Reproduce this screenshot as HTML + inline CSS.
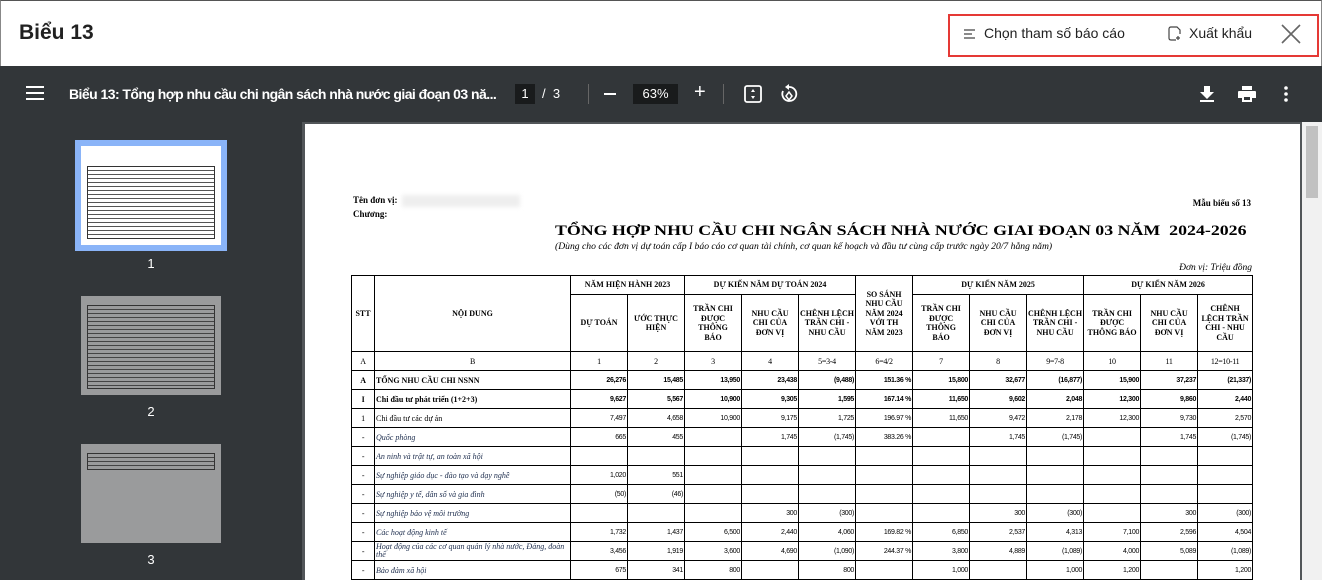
<!DOCTYPE html>
<html><head><meta charset="utf-8">
<style>
*{margin:0;padding:0;box-sizing:border-box}
body{width:1322px;height:580px;overflow:hidden;background:#fff;font-family:"Liberation Sans",sans-serif;position:relative}
.hdr{position:absolute;left:0;top:0;width:1322px;height:66px;background:#fff;border-top:1px solid #555;border-left:1px solid #888;border-right:1px solid #888}
.ttl{position:absolute;left:18px;top:20px;font-size:21px;font-weight:bold;color:#212121}
.redbox{position:absolute;left:947px;top:13px;width:371px;height:43px;border:2px solid #e53935}
.tb{position:absolute;left:0;top:66px;width:1322px;height:56px;background:#323639;color:#fff}
.side{position:absolute;left:0;top:122px;width:302px;height:458px;background:#323639}
.main{position:absolute;left:302px;top:122px;width:1000px;height:458px;background:#525659}
.page{position:absolute;left:305px;top:124px;width:995px;height:456px;background:#fff}
.sb{position:absolute;left:1302px;top:122px;width:20px;height:458px;background:#f1f1f1}
.thumb{position:absolute;background:#fff}
.lbl{position:absolute;color:#fff;font-size:13px;width:20px;text-align:center}
table{position:absolute;left:351px;top:275px;width:901px;border-collapse:collapse;table-layout:fixed;font-family:"Liberation Serif",serif;font-size:8px;color:#000}
td{border:1px solid #000;height:19px;padding:0 1px;text-align:right;font-family:"Liberation Sans",sans-serif;font-size:7px;letter-spacing:-0.3px;overflow:hidden}
td.c{text-align:center;font-family:"Liberation Serif",serif;font-size:8px}
td.l{text-align:left;font-family:"Liberation Serif",serif;font-size:8px;letter-spacing:0}
td.h{text-align:center;font-weight:bold;font-family:"Liberation Serif",serif;font-size:8px;line-height:9.5px;letter-spacing:0;padding:0 4px}
.b td{font-weight:bold}
.i td.l{font-style:italic;color:#203050}
.s{position:absolute;font-family:"Liberation Serif",serif;color:#000;white-space:nowrap}
</style></head><body>
<div class="hdr"><div class="ttl">Biểu 13</div>
<div class="redbox"></div>
<svg style="position:absolute;left:963px;top:27px" width="12" height="12"><path d="M0 2h11M0 6h8M0 10h11" stroke="#444" stroke-width="1.3"/></svg>
<div style="position:absolute;left:983px;top:24px;font-size:14px;color:#222">Chọn tham số báo cáo</div>
<svg style="position:absolute;left:1167px;top:25px" width="15" height="15"><path d="M3 1h6l3 3v4M3 1q-2 0-2 2v9q0 2 2 2h5M10 10v4M8 12h4" stroke="#444" stroke-width="1.2" fill="none"/></svg>
<div style="position:absolute;left:1188px;top:24px;font-size:14px;color:#222">Xuất khẩu</div>
<svg style="position:absolute;left:1280px;top:23px" width="20" height="20"><path d="M1 1L19 19M19 1L1 19" stroke="#666" stroke-width="1.6"/></svg>
</div>
<div class="tb">
<svg style="position:absolute;left:26px;top:20px" width="18" height="14"><path d="M0 1h18M0 7h18M0 13h18" stroke="#fff" stroke-width="2"/></svg>
<div style="position:absolute;left:69px;top:20px;font-size:14px;font-weight:bold;white-space:nowrap;letter-spacing:-0.55px">Biểu 13: Tổng hợp nhu cầu chi ngân sách nhà nước giai đoạn 03 nă...</div>
<div style="position:absolute;left:515px;top:18px;width:20px;height:20px;background:#191b1c;font-size:13px;text-align:center;line-height:20px">1</div>
<div style="position:absolute;left:542px;top:20px;font-size:13px">/ &nbsp;3</div>
<div style="position:absolute;left:588px;top:18px;width:1px;height:20px;background:#666"></div>
<div style="position:absolute;left:604px;top:27px;width:12px;height:2px;background:#fff"></div>
<div style="position:absolute;left:633px;top:18px;width:45px;height:20px;background:#191b1c;font-size:13px;text-align:center;line-height:20px">63%</div>
<div style="position:absolute;left:694px;top:15px;font-size:20px;font-weight:300">+</div>
<div style="position:absolute;left:723px;top:18px;width:1px;height:20px;background:#666"></div>
<svg style="position:absolute;left:744px;top:19px" width="18" height="18"><rect x="1" y="1" width="16" height="16" rx="2" stroke="#fff" stroke-width="1.8" fill="none"/><path d="M9 4l-2 3h4zM9 14l-2-3h4z" fill="#fff"/></svg>
<svg style="position:absolute;left:780px;top:18px" width="18" height="20"><path d="M9 3a7 7 0 1 1-6 4" stroke="#fff" stroke-width="1.8" fill="none"/><path d="M9 0v6l-4-3z" fill="#fff"/><path d="M9 8l3 4-3 4-3-4z" stroke="#fff" stroke-width="1.5" fill="none"/></svg>
<svg style="position:absolute;left:1200px;top:20px" width="14" height="16"><path d="M4 0h6v6h4l-7 7-7-7h4zM0 14h14v2H0z" fill="#fff"/></svg>
<svg style="position:absolute;left:1238px;top:20px" width="18" height="16"><path d="M4 0h10v4H4zM1 5h16q1 0 1 1v6h-4v4H4v-4H0V6q0-1 1-1zM6 11v3h6v-3z" fill="#fff"/></svg>
<svg style="position:absolute;left:1284px;top:20px" width="4" height="16"><circle cx="2" cy="2" r="1.8" fill="#fff"/><circle cx="2" cy="8" r="1.8" fill="#fff"/><circle cx="2" cy="14" r="1.8" fill="#fff"/></svg>
</div>
<div class="side">
<div style="position:absolute;left:75px;top:18px;width:152px;height:111px;background:#8ab4f8"></div>
<div class="thumb" style="left:81px;top:24px;width:140px;height:99px"><div style="position:absolute;left:6px;top:20px;width:128px;height:73px;border:1px solid #333;background:repeating-linear-gradient(#fff 0 3px,#555 3px 4px)"></div></div>
<div class="lbl" style="left:141px;top:134px">1</div>
<div class="thumb" style="left:81px;top:174px;width:140px;height:99px;background:#9a9b9c"><div style="position:absolute;left:6px;top:9px;width:128px;height:84px;border:1px solid #333;background:repeating-linear-gradient(#9a9b9c 0 3px,#444 3px 4px)"></div></div>
<div class="lbl" style="left:141px;top:282px">2</div>
<div class="thumb" style="left:81px;top:322px;width:140px;height:99px;background:#9a9b9c"><div style="position:absolute;left:6px;top:9px;width:128px;height:17px;border:1px solid #333;background:repeating-linear-gradient(#9a9b9c 0 3px,#444 3px 4px)"></div></div>
<div class="lbl" style="left:141px;top:430px">3</div>
</div>
<div class="main"></div>
<div class="page"></div>
<div class="sb"><div style="position:absolute;left:4px;top:4px;width:12px;height:72px;background:#c1c1c1"></div></div>
<div class="s" style="left:353px;top:195px;font-size:9px;font-weight:bold">Tên đơn vị:</div>
<div style="position:absolute;left:402px;top:195px;width:118px;height:12px;background:#eee;filter:blur(2px)"></div>
<div class="s" style="left:353px;top:209px;font-size:9px;font-weight:bold">Chương:</div>
<div class="s" style="right:71px;top:198px;font-size:9px;font-weight:bold">Mẫu biểu số 13</div>
<div class="s" style="left:555px;top:223px;font-size:15px;font-weight:bold;transform:scaleX(1.19);transform-origin:0 0">TỔNG HỢP NHU CẦU CHI NGÂN SÁCH NHÀ NƯỚC GIAI ĐOẠN 03 NĂM &nbsp;2024-2026</div>
<div class="s" style="left:555px;top:241px;font-size:9px;font-style:italic;transform:scaleX(1.07);transform-origin:0 0">(Dùng cho các đơn vị dự toán cấp I báo cáo cơ quan tài chính, cơ quan kế hoạch và đầu tư cùng cấp trước ngày 20/7 hằng năm)</div>
<div class="s" style="right:70px;top:263px;font-size:9.5px;font-style:italic">Đơn vị: Triệu đồng</div>
<table>
<colgroup><col style="width:23px"><col style="width:196px"><col style="width:57px"><col style="width:57px"><col style="width:57px"><col style="width:57px"><col style="width:57px"><col style="width:57px"><col style="width:57px"><col style="width:57px"><col style="width:57px"><col style="width:57px"><col style="width:57px"><col style="width:55px"></colgroup>
<tr><td class="h" rowspan="2" style="padding:0">STT</td><td class="h" rowspan="2">NỘI DUNG</td><td class="h" colspan="2">NĂM HIỆN HÀNH 2023</td><td class="h" colspan="3">DỰ KIẾN NĂM DỰ TOÁN 2024</td><td class="h" rowspan="2">SO SÁNH NHU CẦU NĂM 2024 VỚI TH NĂM 2023</td><td class="h" colspan="3">DỰ KIẾN NĂM 2025</td><td class="h" colspan="3">DỰ KIẾN NĂM 2026</td></tr>
<tr style="height:57px"><td class="h">DỰ TOÁN</td><td class="h">ƯỚC THỰC HIỆN</td><td class="h">TRẦN CHI ĐƯỢC THÔNG BÁO</td><td class="h">NHU CẦU CHI CỦA ĐƠN VỊ</td><td class="h" style="padding:0 1px">CHÊNH LỆCH TRẦN CHI - NHU CẦU</td><td class="h">TRẦN CHI ĐƯỢC THÔNG BÁO</td><td class="h">NHU CẦU CHI CỦA ĐƠN VỊ</td><td class="h" style="padding:0 1px">CHÊNH LỆCH TRẦN CHI - NHU CẦU</td><td class="h" style="padding:0 1px">TRẦN CHI ĐƯỢC THÔNG BÁO</td><td class="h">NHU CẦU CHI CỦA ĐƠN VỊ</td><td class="h" style="padding:0 1px">CHÊNH LỆCH TRẦN CHI - NHU CẦU</td></tr>
<tr><td class="c">A</td><td class="c">B</td><td class="c">1</td><td class="c">2</td><td class="c">3</td><td class="c">4</td><td class="c">5=3-4</td><td class="c">6=4/2</td><td class="c">7</td><td class="c">8</td><td class="c">9=7-8</td><td class="c">10</td><td class="c">11</td><td class="c">12=10-11</td></tr>
<tr class="b"><td class="c">A</td><td class="l">TỔNG NHU CẦU CHI NSNN</td><td>26,276</td><td>15,485</td><td>13,950</td><td>23,438</td><td>(9,488)</td><td>151.36 %</td><td>15,800</td><td>32,677</td><td>(16,877)</td><td>15,900</td><td>37,237</td><td>(21,337)</td></tr>
<tr class="b"><td class="c">I</td><td class="l">Chi đầu tư phát triển (1+2+3)</td><td>9,627</td><td>5,567</td><td>10,900</td><td>9,305</td><td>1,595</td><td>167.14 %</td><td>11,650</td><td>9,602</td><td>2,048</td><td>12,300</td><td>9,860</td><td>2,440</td></tr>
<tr><td class="c">1</td><td class="l">Chi đầu tư các dự án</td><td>7,497</td><td>4,658</td><td>10,900</td><td>9,175</td><td>1,725</td><td>196.97 %</td><td>11,650</td><td>9,472</td><td>2,178</td><td>12,300</td><td>9,730</td><td>2,570</td></tr>
<tr class="i"><td class="c">-</td><td class="l">Quốc phòng</td><td>665</td><td>455</td><td></td><td>1,745</td><td>(1,745)</td><td>383.26 %</td><td></td><td>1,745</td><td>(1,745)</td><td></td><td>1,745</td><td>(1,745)</td></tr>
<tr class="i"><td class="c">-</td><td class="l">An ninh và trật tự, an toàn xã hội</td><td></td><td></td><td></td><td></td><td></td><td></td><td></td><td></td><td></td><td></td><td></td><td></td></tr>
<tr class="i"><td class="c">-</td><td class="l">Sự nghiệp giáo dục - đào tạo và dạy nghề</td><td>1,020</td><td>551</td><td></td><td></td><td></td><td></td><td></td><td></td><td></td><td></td><td></td><td></td></tr>
<tr class="i"><td class="c">-</td><td class="l">Sự nghiệp y tế, dân số và gia đình</td><td>(50)</td><td>(46)</td><td></td><td></td><td></td><td></td><td></td><td></td><td></td><td></td><td></td><td></td></tr>
<tr class="i"><td class="c">-</td><td class="l">Sự nghiệp bảo vệ môi trường</td><td></td><td></td><td></td><td>300</td><td>(300)</td><td></td><td></td><td>300</td><td>(300)</td><td></td><td>300</td><td>(300)</td></tr>
<tr class="i"><td class="c">-</td><td class="l">Các hoạt động kinh tế</td><td>1,732</td><td>1,437</td><td>6,500</td><td>2,440</td><td>4,060</td><td>169.82 %</td><td>6,850</td><td>2,537</td><td>4,313</td><td>7,100</td><td>2,596</td><td>4,504</td></tr>
<tr class="i"><td class="c">-</td><td class="l" style="line-height:8px">Hoạt động của các cơ quan quản lý nhà nước, Đảng, đoàn thể</td><td>3,456</td><td>1,919</td><td>3,600</td><td>4,690</td><td>(1,090)</td><td>244.37 %</td><td>3,800</td><td>4,889</td><td>(1,089)</td><td>4,000</td><td>5,089</td><td>(1,089)</td></tr>
<tr class="i"><td class="c">-</td><td class="l">Bảo đảm xã hội</td><td>675</td><td>341</td><td>800</td><td></td><td>800</td><td></td><td>1,000</td><td></td><td>1,000</td><td>1,200</td><td></td><td>1,200</td></tr>
</table>
</body></html>
